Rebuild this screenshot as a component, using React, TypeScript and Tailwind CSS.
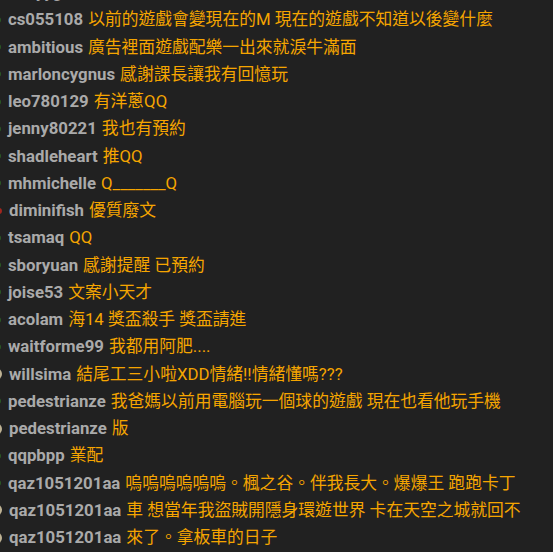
type Msg = {
  name: string;
  text: string;
  avatar: 'green' | 'tan' | 'red';
};

const messages: Msg[] = [
  { name: 'andyyg', text: '我有預約喔', avatar: 'green' },
  { name: 'cs055108', text: '以前的遊戲會變現在的M 現在的遊戲不知道以後變什麼', avatar: 'green' },
  { name: 'ambitious', text: '廣告裡面遊戲配樂一出來就淚牛滿面', avatar: 'green' },
  { name: 'marloncygnus', text: '感謝課長讓我有回憶玩', avatar: 'green' },
  { name: 'leo780129', text: '有洋蔥QQ', avatar: 'green' },
  { name: 'jenny80221', text: '我也有預約', avatar: 'green' },
  { name: 'shadleheart', text: '推QQ', avatar: 'green' },
  { name: 'mhmichelle', text: 'Q_______Q', avatar: 'green' },
  { name: 'diminifish', text: '優質廢文', avatar: 'red' },
  { name: 'tsamaq', text: 'QQ', avatar: 'green' },
  { name: 'sboryuan', text: '感謝提醒 已預約', avatar: 'green' },
  { name: 'joise53', text: '文案小天才', avatar: 'green' },
  { name: 'acolam', text: '海14 獎盃殺手 獎盃請進', avatar: 'green' },
  { name: 'waitforme99', text: '我都用阿肥....', avatar: 'green' },
  { name: 'willsima', text: '結尾工三小啦XDD情緒!!情緒懂嗎???', avatar: 'tan' },
  { name: 'pedestrianze', text: '我爸媽以前用電腦玩一個球的遊戲 現在也看他玩手機', avatar: 'green' },
  { name: 'pedestrianze', text: '版', avatar: 'tan' },
  { name: 'qqpbpp', text: '業配', avatar: 'green' },
  { name: 'qaz1051201aa', text: '嗚嗚嗚嗚嗚嗚。楓之谷。伴我長大。爆爆王 跑跑卡丁', avatar: 'green' },
  { name: 'qaz1051201aa', text: '車 想當年我盜賊開隱身環遊世界 卡在天空之城就回不', avatar: 'tan' },
  { name: 'qaz1051201aa', text: '來了。拿板車的日子', avatar: 'tan' },
];

// only the right edge of each avatar peeks in at the left border
function Avatar({ kind }: { kind: Msg['avatar'] }) {
  if (kind === 'tan') {
    return <div className="w-[12px] h-[12px] rounded-full bg-[#bfb394] shrink-0 ml-[-10px]" />;
  }
  if (kind === 'red') {
    return <div className="w-[6px] h-[6px] rounded-full bg-[#a3261e] shrink-0 ml-[-4px]" />;
  }
  return <div className="w-[6px] h-[6px] rounded-full bg-[#2a5a24] shrink-0 ml-[-5px]" />;
}

export default function App() {
  return (
    <div className="w-[553px] h-[552px] overflow-hidden bg-[#212121] font-['Roboto','Noto_Sans_CJK_TC',sans-serif] text-[16.8px]">
      <div className="mt-[-21px] flex flex-col">
        {messages.map((m, i) => (
          <div key={i} className="h-[27.26px] flex items-center whitespace-nowrap">
            <Avatar kind={m.avatar} />
            <span className="ml-[7px] mr-[5px] font-bold text-[#aaaaaa]">{m.name}</span>
            <span className="text-[#f5a500]">{m.text}</span>
          </div>
        ))}
      </div>
    </div>
  );
}
